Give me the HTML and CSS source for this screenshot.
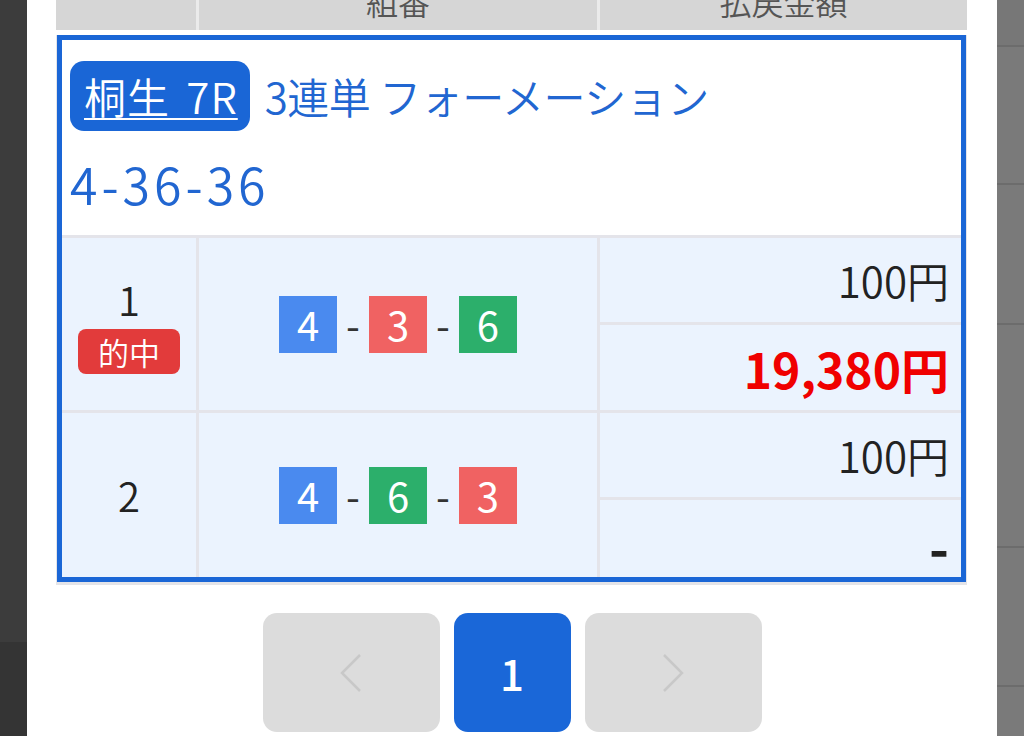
FILE: index.html
```html
<!DOCTYPE html>
<html lang="ja">
<head>
<meta charset="utf-8">
<title>払戻金額</title>
<link rel="stylesheet" href="styles.css">
</head>
<body>
<div class="screen">
  <div class="side side-left">
    <div class="band band-a"></div>
    <div class="band band-b"></div>
  </div>
  <div class="modal">
    <div class="table">
      <div class="thead">
        <div class="th"></div>
        <div class="th">組番</div>
        <div class="th">払戻金額</div>
      </div>
      <div class="tbody">
        <div class="box">
          <div class="box-head">
            <div class="title-line">
              <a class="race-badge" href="#">桐生 7R</a>
              <span class="bet-type">3連単 フォーメーション</span>
            </div>
            <div class="combo">4-36-36</div>
          </div>
          <div class="rows">
            <div class="cell cell-no">
              <div class="no">1</div>
              <div class="hit">的中</div>
            </div>
            <div class="cell cell-combo">
              <span class="boat b4">4</span><span class="dash">-</span><span class="boat b3">3</span><span class="dash">-</span><span class="boat b6">6</span>
            </div>
            <div class="cell cell-money">
              <div class="sub sub-a"><span class="amount">100円</span></div>
              <div class="sub sub-b"><span class="payout">19,380円</span></div>
            </div>

            <div class="cell cell-no">
              <div class="no">2</div>
            </div>
            <div class="cell cell-combo">
              <span class="boat b4">4</span><span class="dash">-</span><span class="boat b6">6</span><span class="dash">-</span><span class="boat b3">3</span>
            </div>
            <div class="cell cell-money">
              <div class="sub sub-a"><span class="amount">100円</span></div>
              <div class="sub sub-c"><span class="none">-</span></div>
            </div>
          </div>
        </div>
      </div>
    </div>
    <div class="pager">
      <div class="page-btn page-nav">
        <svg width="24" height="40" viewBox="0 0 24 40"><polyline points="21,2 3,20 21,38" fill="none" stroke="#c8c8c8" stroke-width="2.5"/></svg>
      </div>
      <div class="page-btn page-current">1</div>
      <div class="page-btn page-nav">
        <svg width="24" height="40" viewBox="0 0 24 40"><polyline points="3,2 21,20 3,38" fill="none" stroke="#c8c8c8" stroke-width="2.5"/></svg>
      </div>
    </div>
  </div>
  <div class="side side-right">
    <div class="rband r1"></div>
    <div class="rband r2"></div>
    <div class="rband r3"></div>
    <div class="rband r4"></div>
    <div class="rband r5"></div>
    <div class="rband r6"></div>
  </div>
</div>
</body>
</html>
```
FILE: styles.css
```css
* { box-sizing: border-box; }
html, body { margin: 0; padding: 0; }
body {
  font-family: "Noto Sans CJK JP", "Noto Sans", sans-serif;
  font-weight: 350;
  background: #3b3b3b;
}
.screen {
  display: grid;
  grid-template-columns: 27px 970px 27px;
  width: 1024px;
  height: 736px;
  overflow: hidden;
}
.side-left { display: flex; flex-direction: column; }
.band-a { height: 642px; background: #3c3c3c; }
.band-b { flex: 1; background: #343434; }
.side-right { display: flex; flex-direction: column; background: #7a7a7a; }
.rband { border-bottom: 2px solid #6c6c6c; }
.r1 { height: 47px; background: #777; }
.r2 { height: 138px; }
.r3 { height: 140px; }
.r4 { height: 223px; }
.r5 { height: 139px; }
.r6 { flex: 1; border-bottom: none; }

.modal {
  background: #fff;
  padding: 0 30px 0 29px;
}
.table { margin-top: -40px; }
.thead {
  display: grid;
  grid-template-columns: 140px 398px 1fr;
  gap: 3px;
  background: #ebebeb;
  height: 70px;
}
.th {
  background: #d6d6d6;
  color: #555;
  font-size: 32px;
  line-height: 40px;
  display: flex;
  align-items: center;
  justify-content: center;
  padding-top: 12px;
}
.tbody {
  margin-top: 5px;
  border: 1px solid #e4e4e8;
  border-top: none;
  border-bottom-width: 3px;
}
.box {
  border: 5px solid #1a66d6;
}
.box-head {
  background: #fff;
  padding: 21px 8px 22px;
  color: #2166d1;
}
.title-line {
  display: flex;
  align-items: center;
  gap: 15px;
}
.race-badge {
  display: block;
  background: #1a66d6;
  color: #fff;
  font-size: 42px;
  line-height: 50px;
  padding: 10px 12px 10px 14px;
  border-radius: 14px;
  letter-spacing: 1px;
  word-spacing: 6px;
  text-decoration: underline;
  text-decoration-thickness: 2px;
  text-underline-offset: 4px;
}
.bet-type {
  font-size: 42px;
  line-height: 50px;
  letter-spacing: -0.5px;
  white-space: pre;
}
.combo {
  margin-top: 22px;
  font-size: 50px;
  line-height: 60px;
  letter-spacing: 4px;
}
.rows {
  display: grid;
  grid-template-columns: 134px 398px 1fr;
  gap: 3px;
  padding-top: 3px;
  background: #e4e4ea;
}
.cell { background: #ebf3fe; }
.cell-no {
  display: flex;
  flex-direction: column;
  align-items: center;
  justify-content: center;
  color: #222;
}
.no { font-size: 40px; line-height: 48px; }
.hit {
  margin-top: 6px;
  background: #e23b3b;
  color: #fff;
  font-size: 31px;
  line-height: 35px;
  padding: 5px 20px;
  border-radius: 8px;
}
.cell-combo {
  display: flex;
  align-items: center;
  justify-content: center;
}
.boat {
  width: 58px;
  height: 57px;
  color: #fff;
  font-size: 40px;
  font-weight: 400;
  line-height: 57px;
  text-align: center;
}
.b4 { background: #4a8aef; }
.b3 { background: #f06262; }
.b6 { background: #2caf6b; }
.dash {
  font-size: 40px;
  font-weight: 400;
  line-height: 57px;
  color: #333;
  margin: 0 9px;
}
.cell-money {
  display: grid;
  gap: 3px;
  background: #e4e4ea;
}
.sub {
  background: #ebf3fe;
  display: flex;
  align-items: center;
  justify-content: flex-end;
  padding-right: 12px;
}
.sub-a { height: 84px; }
.sub-b { height: 85px; }
.sub-c { height: 77px; padding-top: 14px; }
.amount { font-size: 42px; line-height: 50px; color: #222; }
.payout { font-size: 48px; line-height: 56px; color: #f00000; font-weight: 700; }
.none { font-size: 54px; line-height: 50px; color: #222; font-weight: 700; }

.pager {
  display: flex;
  justify-content: center;
  gap: 14px;
  margin-top: 28px;
  padding-left: 1px;
}
.page-btn {
  height: 119px;
  border-radius: 14px;
  display: flex;
  align-items: center;
  justify-content: center;
}
.page-nav { width: 177px; background: #dcdcdc; }
.page-current {
  width: 117px;
  background: #1a67d8;
  color: #fff;
  font-size: 42px;
  font-weight: 500;
}
```
